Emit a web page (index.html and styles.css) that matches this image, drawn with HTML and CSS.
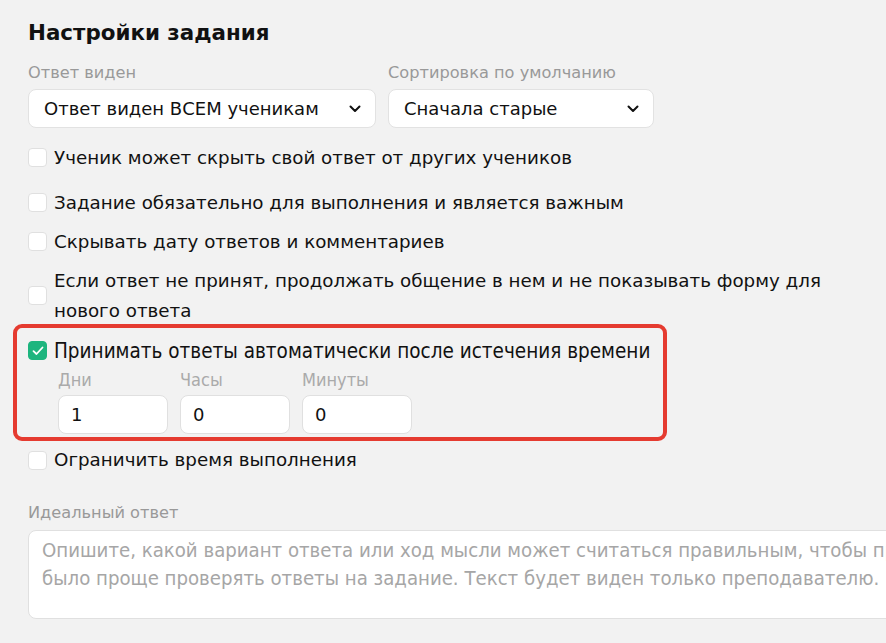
FILE: index.html
```html
<!DOCTYPE html>
<html lang="ru">
  <head>
    <meta charset="UTF-8" />
    <meta name="viewport" content="width=device-width, initial-scale=1.0" />
    <title>Настройки задания</title>
    <link rel="stylesheet" href="styles.css">
  </head>
  <body>
    <main class="settings">
      <h1>Настройки задания</h1>

      <div class="selects">
        <label class="field field-wide">
          <span class="field-label">Ответ виден</span>
          <span class="select">
            Ответ виден ВСЕМ ученикам
            <svg class="chevron" width="12" height="8" viewBox="0 0 12 8"><path d="M1.5 1.5 6 6l4.5-4.5" fill="none" stroke="#111" stroke-width="2" stroke-linecap="round" stroke-linejoin="round"/></svg>
          </span>
        </label>
        <label class="field field-narrow">
          <span class="field-label">Сортировка по умолчанию</span>
          <span class="select">
            Сначала старые
            <svg class="chevron" width="12" height="8" viewBox="0 0 12 8"><path d="M1.5 1.5 6 6l4.5-4.5" fill="none" stroke="#111" stroke-width="2" stroke-linecap="round" stroke-linejoin="round"/></svg>
          </span>
        </label>
      </div>

      <ul class="options">
        <li class="option first">
          <span class="box"></span>
          <span class="text">Ученик может скрыть свой ответ от других учеников</span>
        </li>
        <li class="option">
          <span class="box"></span>
          <span class="text">Задание обязательно для выполнения и является важным</span>
        </li>
        <li class="option">
          <span class="box"></span>
          <span class="text">Скрывать дату ответов и комментариев</span>
        </li>
        <li class="option two-lines">
          <span class="box"></span>
          <span class="text">Если ответ не принят, продолжать общение в нем и не показывать форму для нового ответа</span>
        </li>
        <li class="highlight">
          <div class="option checked">
            <span class="box">
              <svg width="12" height="10" viewBox="0 0 12 10"><path d="M1.5 5.2 4.5 8l6-6.5" fill="none" stroke="#fff" stroke-width="1.8" stroke-linecap="round" stroke-linejoin="round"/></svg>
            </span>
            <span class="condensed">Принимать ответы автоматически после истечения времени</span>
          </div>
          <div class="timer">
            <label class="time">
              <span class="time-label">Дни</span>
              <span class="time-input">1</span>
            </label>
            <label class="time">
              <span class="time-label">Часы</span>
              <span class="time-input">0</span>
            </label>
            <label class="time">
              <span class="time-label">Минуты</span>
              <span class="time-input">0</span>
            </label>
          </div>
        </li>
        <li class="option">
          <span class="box"></span>
          <span class="text">Ограничить время выполнения</span>
        </li>
      </ul>

      <div class="answer">
        <span class="field-label">Идеальный ответ</span>
        <div class="textarea">Опишите, какой вариант ответа или ход мысли может считаться правильным, чтобы преподавателю<br>было проще проверять ответы на задание. Текст будет виден только преподавателю.</div>
      </div>
    </main>
  </body>
</html>
```

FILE: styles.css
```css
body {
  margin: 0;
  background: #f2f2f2;
  font-family: "DejaVu Sans", sans-serif;
  color: #111;
  overflow: hidden;
}

.settings {
  padding: 17px 0 0 28px;
}

h1 {
  margin: 0;
  font-size: 21.4px;
  line-height: 32px;
  font-weight: bold;
}

.selects {
  display: flex;
  gap: 12px;
  margin-top: 14px;
}

.field {
  display: flex;
  flex-direction: column;
}

.field-wide {
  width: 348px;
}

.field-narrow {
  width: 266px;
}

.field-label {
  font-size: 16.2px;
  line-height: 20px;
  color: #999;
  margin-bottom: 6px;
}

.select {
  display: flex;
  align-items: center;
  justify-content: space-between;
  height: 39px;
  box-sizing: border-box;
  padding: 0 14px 0 15px;
  background: #fff;
  border: 1px solid #e2e2e2;
  border-radius: 8px;
  font-size: 18px;
}

.options {
  list-style: none;
  margin: 10px 0 0;
  padding: 0;
}

.option {
  display: flex;
  align-items: center;
  gap: 7px;
  font-size: 18.3px;
  line-height: 30px;
  padding: 4.5px 0;
}

.option .text {
  max-width: 790px;
}

.option.first {
  padding-bottom: 10.5px;
}

.option.two-lines {
  padding-bottom: 0;
}

.box {
  flex: none;
  width: 19px;
  height: 19px;
  box-sizing: border-box;
  border: 1px solid #e0e0e0;
  border-radius: 4px;
  background: #fff;
  display: flex;
  align-items: center;
  justify-content: center;
}

.checked .box {
  background: #1db57e;
  border-color: #1db57e;
}

.condensed {
  font-stretch: condensed;
  font-size: 20.5px;
}

.highlight {
  margin: -2px 0 0 -15px;
  width: 654px;
  box-sizing: border-box;
  border: 4px solid #e53b30;
  border-radius: 9px;
  padding: 8px 0 3px 11px;
}

.highlight .option {
  padding: 0;
}

.timer {
  display: flex;
  gap: 12px;
  padding-left: 30px;
  margin-top: 3px;
}

.time {
  display: flex;
  flex-direction: column;
  gap: 4px;
  width: 110px;
}

.time-label {
  font-stretch: condensed;
  font-size: 18px;
  line-height: 22px;
  color: #aaa;
}

.time-input {
  height: 39px;
  box-sizing: border-box;
  background: #fff;
  border: 1px solid #e0e0e0;
  border-radius: 8px;
  padding: 0 12px;
  font-size: 18px;
  line-height: 37px;
}

.answer {
  margin-top: 23.5px;
  display: flex;
  flex-direction: column;
}

.answer .field-label {
  margin-bottom: 7px;
}

.textarea {
  width: 1000px;
  height: 89px;
  box-sizing: border-box;
  background: #fff;
  border: 1px solid #e0e0e0;
  border-radius: 8px;
  padding: 5px 0 0 13px;
  font-stretch: condensed;
  font-size: 20.2px;
  line-height: 28px;
  color: #a6a6a6;
  white-space: nowrap;
}
```
